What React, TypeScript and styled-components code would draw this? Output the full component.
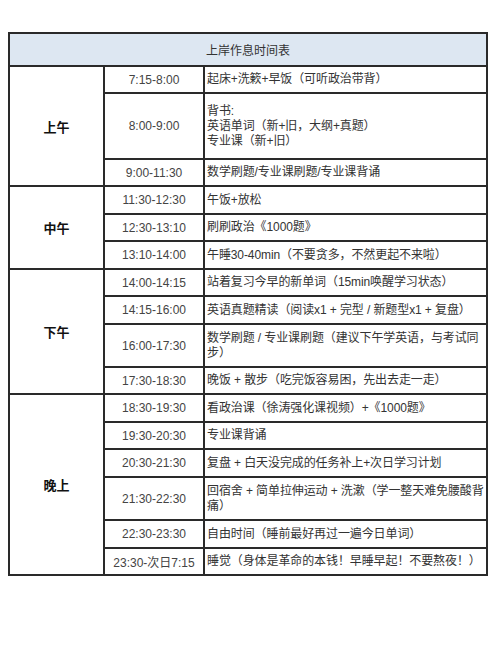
import styled, { createGlobalStyle } from "styled-components";

const GlobalStyle = createGlobalStyle`
  body {
    margin: 0;
    background: #ffffff;
    font-family: "Liberation Sans", "Noto Sans CJK SC", sans-serif;
  }
`;

const Page = styled.div`
  width: 500px;
  height: 654px;
  padding: 32px 0 0 8px;
  box-sizing: border-box;
  background: #ffffff;
`;

const Table = styled.table`
  width: 480px;
  border-collapse: collapse;
  table-layout: fixed;
  border: 2px solid #2a2a2a;
  font-size: 12px;
  color: #333;
`;

const TitleCell = styled.th`
  height: 31px;
  padding: 0;
  background: #dde7f2;
  border: 2px solid #2a2a2a;
  font-weight: normal;
  color: #333;
  text-align: center;
`;

const Row = styled.tr<{ $h: number }>`
  height: ${(p) => p.$h}px;
`;

const PeriodCell = styled.td`
  border: 2px solid #2a2a2a;
  text-align: center;
  font-size: 13px;
  font-weight: bold;
  color: #111;
  padding: 0;
`;

const TimeCell = styled.td`
  border: 2px solid #2a2a2a;
  text-align: center;
  color: #444;
  padding: 0;
  white-space: nowrap;
`;

const TaskCell = styled.td`
  border: 2px solid #2a2a2a;
  padding: 0 0 0 2px;
  line-height: 15px;
  letter-spacing: -0.1px;
  color: #333;
`;

type Item = { time: string; task: string[]; h: number };
type Block = { label: string; items: Item[] };

const blocks: Block[] = [
  {
    label: "上午",
    items: [
      { time: "7:15-8:00", task: ["起床+洗簌+早饭（可听政治带背）"], h: 27 },
      {
        time: "8:00-9:00",
        task: ["背书:", "英语单词（新+旧，大纲+真题）", "专业课（新+旧）"],
        h: 66,
      },
      { time: "9:00-11:30", task: ["数学刷题/专业课刷题/专业课背诵"], h: 27 },
    ],
  },
  {
    label: "中午",
    items: [
      { time: "11:30-12:30", task: ["午饭+放松"], h: 28 },
      { time: "12:30-13:10", task: ["刷刷政治《1000题》"], h: 27 },
      { time: "13:10-14:00", task: ["午睡30-40min（不要贪多，不然更起不来啦）"], h: 28 },
    ],
  },
  {
    label: "下午",
    items: [
      { time: "14:00-14:15", task: ["站着复习今早的新单词（15min唤醒学习状态）"], h: 27 },
      { time: "14:15-16:00", task: ["英语真题精读（阅读x1 + 完型 / 新题型x1 + 复盘）"], h: 28 },
      {
        time: "16:00-17:30",
        task: ["数学刷题 / 专业课刷题（建议下午学英语，与考试同步）"],
        h: 43,
      },
      { time: "17:30-18:30", task: ["晚饭 + 散步（吃完饭容易困，先出去走一走）"], h: 27 },
    ],
  },
  {
    label: "晚上",
    items: [
      { time: "18:30-19:30", task: ["看政治课（徐涛强化课视频）+《1000题》"], h: 28 },
      { time: "19:30-20:30", task: ["专业课背诵"], h: 27 },
      { time: "20:30-21:30", task: ["复盘 + 白天没完成的任务补上+次日学习计划"], h: 28 },
      {
        time: "21:30-22:30",
        task: ["回宿舍 + 简单拉伸运动 + 洗漱（学一整天难免腰酸背痛）"],
        h: 43,
      },
      { time: "22:30-23:30", task: ["自由时间（睡前最好再过一遍今日单词）"], h: 28 },
      { time: "23:30-次日7:15", task: ["睡觉（身体是革命的本钱！早睡早起！不要熬夜！）"], h: 27 },
    ],
  },
];

export default function App() {
  return (
    <>
      <GlobalStyle />
      <Page>
        <Table>
          <colgroup>
            <col style={{ width: 95 }} />
            <col style={{ width: 100 }} />
            <col />
          </colgroup>
          <thead>
            <tr>
              <TitleCell colSpan={3}>上岸作息时间表</TitleCell>
            </tr>
          </thead>
          <tbody>
            {blocks.map((b) =>
              b.items.map((it, i) => (
                <Row key={b.label + it.time} $h={it.h}>
                  {i === 0 && <PeriodCell rowSpan={b.items.length}>{b.label}</PeriodCell>}
                  <TimeCell>{it.time}</TimeCell>
                  <TaskCell>
                    {it.task.map((line) => (
                      <div key={line}>{line}</div>
                    ))}
                  </TaskCell>
                </Row>
              ))
            )}
          </tbody>
        </Table>
      </Page>
    </>
  );
}
